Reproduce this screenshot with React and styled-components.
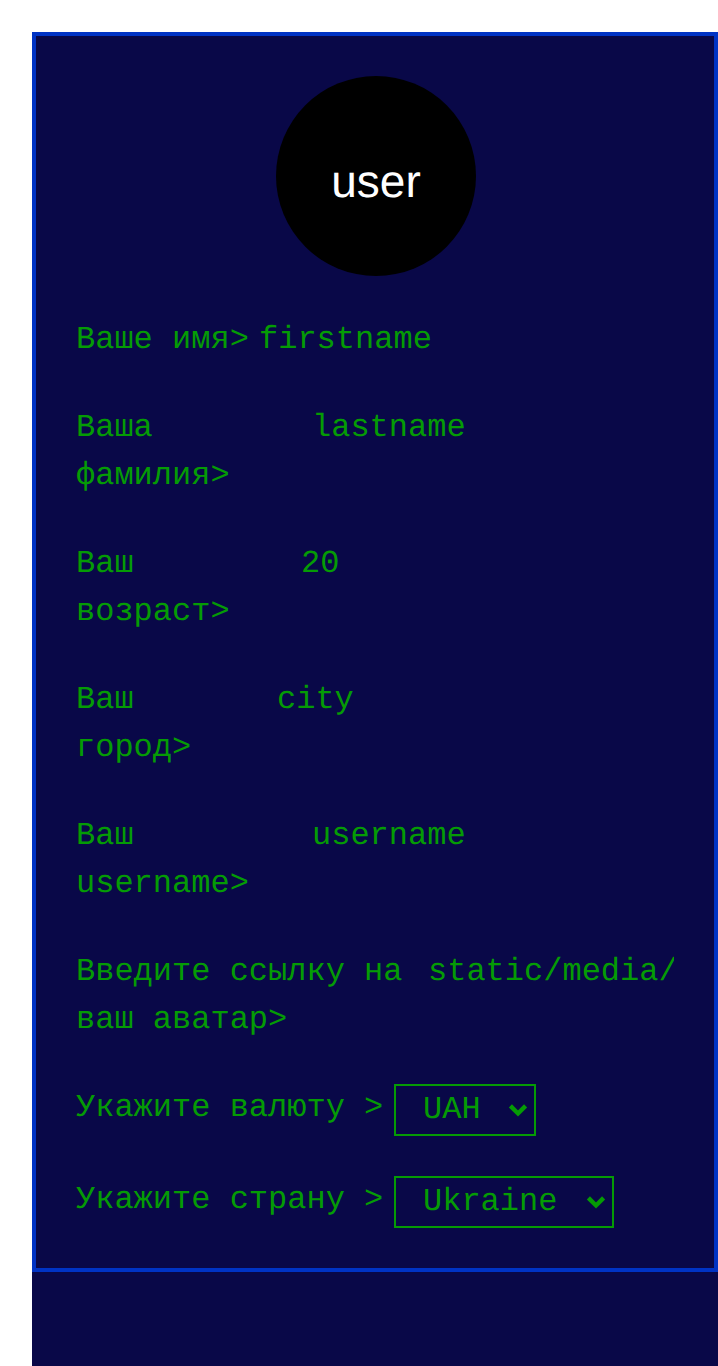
import React from "react";
import styled, { createGlobalStyle } from "styled-components";

const Global = createGlobalStyle`
  * { box-sizing: border-box; }
  body { margin: 0; background: #fff; overflow: hidden; }
`;
const Page = styled.main`
  margin: 32px 0 0 32px;
  height: 1334px;
  background: #090848;
  color: #059b05;
  font: 32px/48px "Liberation Mono", monospace;
  text-rendering: geometricPrecision;
`;
const Panel = styled.section`
  height: 1240px;
  border: 4px solid #0033c4;
  padding: 40px;
  display: flex;
  flex-direction: column;
`;
const Avatar = styled.div`
  width: 200px;
  height: 200px;
  margin: 0 0 40px 200px;
  border-radius: 50%;
  background: #000;
  color: #fff;
  font: 46px/211px "Liberation Sans", sans-serif;
  text-align: center;
`;
const Row = styled.div`
  display: flex;
  align-items: flex-start;
  margin-bottom: 40px;
`;
const Label = styled.label`
  flex: none;
  width: ${(p) => p.$width}px;
`;
const Value = styled.span`
  flex: 1;
  min-width: 0;
  overflow: hidden;
  white-space: nowrap;
`;
const SelectBox = styled.button`
  display: flex;
  align-items: center;
  justify-content: space-between;
  width: ${(p) => p.$width}px;
  height: 52px;
  margin: 0;
  padding: 0 7px 0 27px;
  border: 2px solid #059b05;
  background: transparent;
  color: inherit;
  font: inherit;
  text-rendering: inherit;
`;
const Arrow = styled.svg`
  width: 18px;
  height: 12px;
  overflow: visible;
`;

const fields = [
  { label: ["Ваше имя>"], width: 183, value: "firstname" },
  { label: ["Ваша", "фамилия>"], width: 236, value: "lastname" },
  { label: ["Ваш", "возраст>"], width: 225, value: "20" },
  { label: ["Ваш", "город>"], width: 201, value: "city" },
  { label: ["Ваш", "username>"], width: 236, value: "username" },
  { label: ["Введите ссылку на", "ваш аватар>"], width: 352, value: "static/media/user.png" },
];
const selects = [
  { label: "Укажите валюту >", value: "UAH", width: 142 },
  { label: "Укажите страну >", value: "Ukraine", width: 220 },
];

const Chevron = () => (
  <Arrow viewBox="0 0 18 12" fill="none" stroke="currentColor" strokeWidth="4.4">
    <path d="M1.4 1.9 9 9.500l7.600-7.600" />
  </Arrow>
);

export default function App() {
  return (
    <>
      <Global />
      <Page>
        <Panel>
          <Avatar>user</Avatar>
          {fields.map((f) => (
            <Row key={f.value}>
              <Label $width={f.width}>
                {f.label.map((line, i) => (
                  <React.Fragment key={line}>{i > 0 && <br />}{line}</React.Fragment>
                ))}
              </Label>
              <Value>{f.value}</Value>
            </Row>
          ))}
          {selects.map((s) => (
            <Row key={s.value}>
              <Label $width={318}>{s.label}</Label>
              <SelectBox $width={s.width}>{s.value}<Chevron /></SelectBox>
            </Row>
          ))}
        </Panel>
      </Page>
    </>
  );
}
